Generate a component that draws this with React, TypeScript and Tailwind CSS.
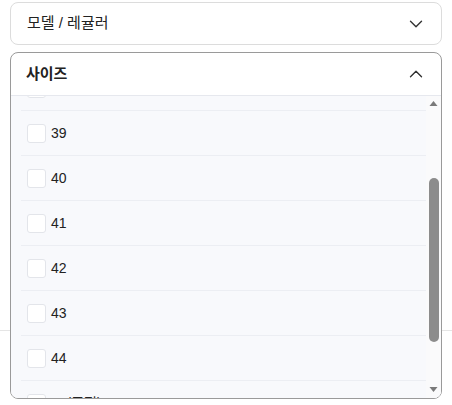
import { useEffect, useRef } from 'react';
import { ChevronDown, ChevronUp } from 'lucide-react';

const sizes = ['36', '37', '38', '39', '40', '41', '42', '43', '44', '45(품절)', '46'];

export default function App() {
  const listRef = useRef<HTMLDivElement>(null);

  useEffect(() => {
    if (listRef.current) listRef.current.scrollTop = 120;
  }, []);

  return (
    <div
      className="relative h-[405px] w-[452px] overflow-hidden bg-white text-[#222]"
      style={{ fontFamily: '"Liberation Sans", "Noto Sans CJK KR", sans-serif' }}
    >
      <div className="absolute left-0 right-0 top-[330px] border-t border-[#e5e5e5]" />
      <div className="relative flex flex-col gap-[7px] px-[10px] pt-[2px]">
        <div className="flex h-[43px] items-center justify-between rounded-lg border border-[#dcdcdc] bg-white pl-[16px] pr-[14px]">
          <span className="text-[15px]">모델 / 레귤러</span>
          <ChevronDown className="h-[22px] w-[22px] text-[#333]" strokeWidth={1.5} />
        </div>
        <div className="flex h-[347px] flex-col overflow-hidden rounded-lg border border-[#9a9a9a] bg-white">
          <div className="flex h-[42px] shrink-0 items-center justify-between pl-[15px] pr-[14px]">
            <span className="text-[15px] font-bold">사이즈</span>
            <ChevronUp className="h-[22px] w-[22px] text-[#333]" strokeWidth={1.5} />
          </div>
          <div className="flex min-h-0 flex-1 border-t border-[#e6e8ee] bg-[#f8f9fc]">
            <div ref={listRef} className="flex-1 overflow-hidden">
              {sizes.map((s) => (
                <label key={s} className="flex h-[45px] flex-col">
                  <div className="flex flex-1 items-center gap-[5px] pl-[16px]">
                    <span className="h-[19px] w-[19px] rounded-[3px] border border-[#e3e5ea] bg-white" />
                    <span className="text-[14px]">{s}</span>
                  </div>
                  <div className="ml-[10px] border-b border-[#eceef3]" />
                </label>
              ))}
            </div>
            {/* scrollbar */}
            <div className="flex w-[15px] flex-col items-center bg-[#fafafb]">
              <svg width="9" height="14" viewBox="0 0 9 14" className="shrink-0">
                <path d="M0.5 10 L4.5 5 L8.5 10 Z" fill="#7a7a7a" />
              </svg>
              <div className="flex w-full flex-1 flex-col items-center pt-[68px]">
                <div className="h-[164px] w-[10px] rounded-[5px] bg-[#8c8c8c]" />
              </div>
              <svg width="9" height="16" viewBox="0 0 9 16" className="shrink-0">
                <path d="M0.5 5 L4.5 10 L8.5 5 Z" fill="#7a7a7a" />
              </svg>
            </div>
          </div>
        </div>
      </div>
    </div>
  );
}
